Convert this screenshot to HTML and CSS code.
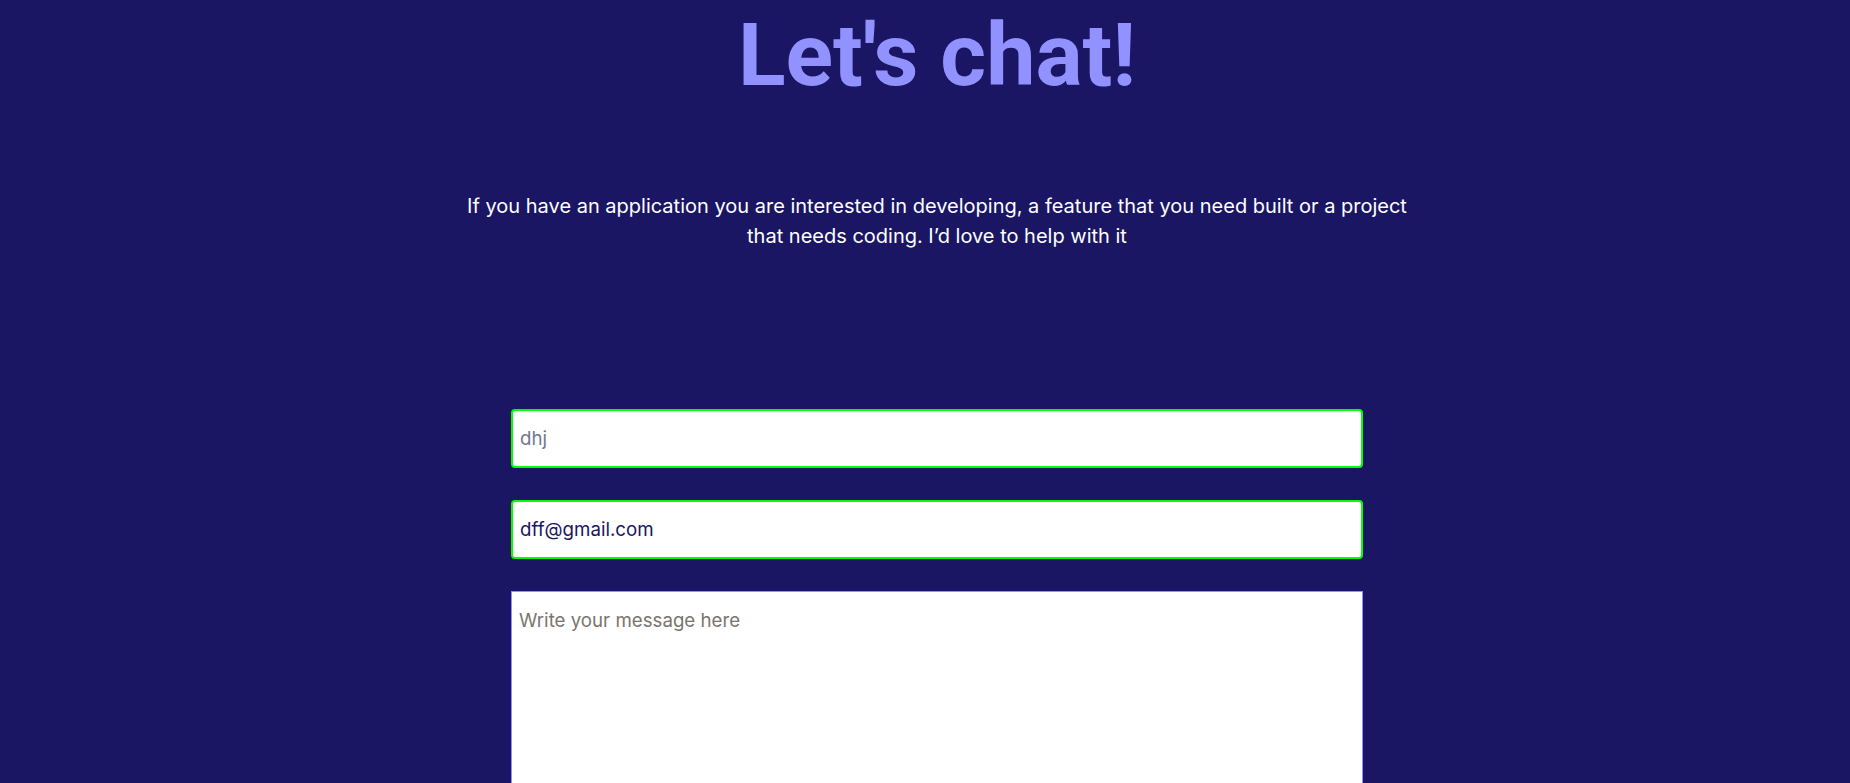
FILE: index.html
```html
<!DOCTYPE html>
<html lang="en">
<head>
<meta charset="utf-8">
<title>Let's chat!</title>
<link rel="stylesheet" href="styles.css">
</head>
<body>
<main class="contact">
  <h1 class="contact-title">Let's chat!</h1>
  <p class="contact-intro">If you have an application you are interested in developing, a feature that you need built or a project that needs coding. I’d love to help with it</p>
  <form class="contact-form">
    <input class="field field-valid" type="text" placeholder="dhj">
    <input class="field field-valid" type="email" value="dff@gmail.com">
    <textarea class="message" placeholder="Write your message here"></textarea>
  </form>
</main>
</body>
</html>
```

FILE: styles.css
```css
html, body {
  margin: 0;
  padding: 0;
  background: #1a1663;
}

body {
  font-family: "Inter", "Noto Sans", sans-serif;
  overflow: hidden;
}

.contact {
  margin-left: 24px;
  padding-top: 3px;
  display: flex;
  flex-direction: column;
  align-items: center;
}

.contact-title {
  margin: 0;
  font-family: "Roboto", "Liberation Sans", sans-serif;
  font-weight: 700;
  font-size: 88px;
  line-height: normal;
  color: #9191ff;
}

.contact-intro {
  margin: 85px 0 0;
  max-width: 960px;
  text-align: center;
  font-size: 20px;
  line-height: 30px;
  color: #ffffff;
}

.contact-form {
  margin-top: 158px;
  width: 852px;
  display: flex;
  flex-direction: column;
  gap: 32px;
}

.field {
  box-sizing: border-box;
  width: 100%;
  height: 59px;
  margin: 0;
  padding: 0 7px;
  border: 2px solid #00ff00;
  border-radius: 4px;
  background: #ffffff;
  font-family: "Inter", "Noto Sans", sans-serif;
  font-size: 18.7px;
  color: #1a1663;
  outline: none;
}

.field::placeholder {
  color: #707792;
}

.message {
  box-sizing: border-box;
  width: 100%;
  height: 320px;
  margin: 0;
  padding: 14px 7px;
  border: 1px solid #8f8fff;
  border-radius: 0;
  background: #ffffff;
  font-family: "Inter", "Noto Sans", sans-serif;
  font-size: 18.7px;
  line-height: 29.25px;
  color: #1a1663;
  resize: none;
  outline: none;
}

.message::placeholder {
  color: #7a746e;
}
```
